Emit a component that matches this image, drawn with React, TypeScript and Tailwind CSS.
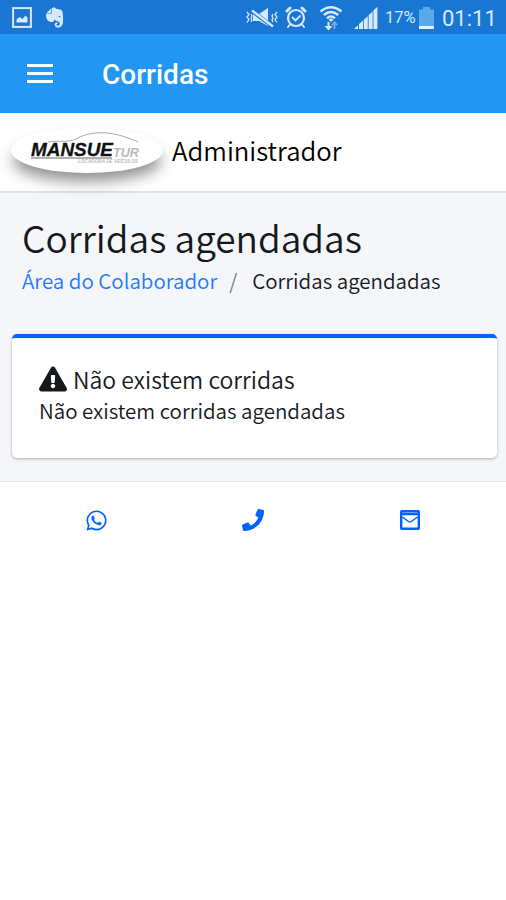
import React from 'react';
import { FaEvernote, FaExclamationTriangle, FaPhone, FaWhatsapp } from 'react-icons/fa';

const PictureIcon = () => (
  <svg width="20" height="21" viewBox="0 0 20 21" fill="none">
    <rect x="1.1" y="1.1" width="17.8" height="18.8" stroke="currentColor" strokeWidth="2" />
    <path d="M4.500 15.500v-3l3-2.500 3 2 3-3.500 2 2v5z" fill="currentColor" />
  </svg>
);

const MutedIcon = () => (
  <svg width="34" height="22" viewBox="0 0 34 22" fill="none" stroke="currentColor">
    <path d="M8 7h6l9-6v18l-9-5H8z" fill="currentColor" stroke="none" />
    <path d="M7 4l20 15" stroke="#1976d2" strokeWidth="4" />
    <path d="M7 3.500l21 16" strokeWidth="2.400" />
    <path d="M2 5l2 2.500-2 2.500 2 2.500-2 3M6 7l1 2-1 2 1 2-1 2M32 5l-2 2.500 2 2.500-2 2.500 2 3M28 7l-1 2 1 2-1 2 1 2" strokeWidth="1.300" />
  </svg>
);

const AlarmIcon = () => (
  <svg width="22" height="23" viewBox="0 0 22 23" fill="none" stroke="currentColor" strokeLinecap="round">
    <circle cx="11" cy="12" r="8" strokeWidth="2.200" />
    <path d="M2 5l3-3M20 5l-3-3" strokeWidth="3" />
    <path d="M5 18.500l-2 2.500M17 18.500l2 2.500" strokeWidth="2" />
    <path d="M7.500 11.500l3 3 4.500-4.500" strokeWidth="1.800" />
  </svg>
);

const WifiIcon = () => (
  <svg width="24" height="26" viewBox="0 0 24 26" fill="none" stroke="currentColor">
    <path d="M1.500 6.500Q12-2 22.500 6.500M4.800 10Q12 4 19.200 10M8 13.200q4-3.300 8 0" strokeWidth="2.400" />
    <path d="M12 17l-2.500-2.500q2.500-1.800 5 0z" fill="currentColor" stroke="none" />
    <path d="M9.500 17v5" strokeWidth="2" />
    <path d="M5.500 21h8l-4 4.500z" fill="currentColor" stroke="none" />
    <path d="M15.500 24v-5M13 20l2.500-2.800L18 20" strokeWidth="1.500" opacity=".55" />
  </svg>
);

const SignalIcon = () => (
  <svg width="24" height="23" viewBox="0 0 24 23" fill="currentColor">
    <path d="M0 23l4-3.800V23zM5 18l4-3.500V23H5zM9.800 13.700l4-3.500V23h-4zM14.600 9.200l4-3.600V23h-4zM19.400 4.500L23.400 .800V23h-4z" />
  </svg>
);

const BatteryIcon = () => (
  <svg width="15" height="22" viewBox="0 0 15 22">
    <path d="M4 0h7v2.500h4V22H0V2.500h4z" fill="#5aa9ea" />
    <path d="M0 19h15v3H0z" fill="#e3f0ff" />
  </svg>
);

const EnvelopeSquareIcon = () => (
  <svg width="20" height="20" viewBox="0 0 20 20" fill="none" stroke="currentColor">
    <rect x="1.200" y="1.200" width="17.600" height="17.600" rx=".5" strokeWidth="2.400" />
    <path d="M2 4h16" strokeWidth="2.500" />
    <path d="M2.500 7l6 4.500q1.500 1 3 0l6-4.500" strokeWidth="1.500" />
  </svg>
);

const Logo = () => (
  <div className="h-[45px] w-[152px] rounded-[50%] bg-white shadow-[0_10px_15px_-2px_rgba(0,0,0,0.45)]">
    <svg width="152" height="45" viewBox="0 0 152 45" fontFamily="'Liberation Sans', sans-serif" fontStyle="italic">
      <path d="M37 14C48 12 57 15 65 11C78 3 98 3 114 9Q121 11 127 14" fill="none" stroke="#aaa" />
      <path d="M20 30h81" stroke="#999" strokeWidth="1.500" />
      <text x="20" y="28" fontSize="18" fontWeight="bold" fill="#111" stroke="#111" strokeWidth=".3" textLength="82" lengthAdjust="spacingAndGlyphs">MANSUE</text>
      <text x="102" y="29" fontSize="13.500" fontWeight="bold" fill="#bbb" textLength="26" lengthAdjust="spacingAndGlyphs">TUR</text>
      <text x="67" y="35" fontSize="4.500" fontWeight="bold" fill="#bbb" textLength="60" lengthAdjust="spacingAndGlyphs">LOCADORA DE VEÍCULOS</text>
    </svg>
  </div>
);

const StatusBar = () => (
  <div className="flex h-[34px] items-center bg-[#1976d2] font-[Roboto,sans-serif] text-[#d6e9ff]">
    <div className="ml-3 flex items-center gap-[11px]">
      <PictureIcon />
      <FaEvernote size={23} />
    </div>
    <div className="ml-auto mr-[11px] flex items-center pt-px">
      <MutedIcon />
      <span className="ml-[6px]"><AlarmIcon /></span>
      <span className="ml-[12px]"><WifiIcon /></span>
      <span className="ml-[11px]"><SignalIcon /></span>
      <span className="ml-[7px] w-[30px] whitespace-nowrap pt-[2px] text-[16.5px] font-normal">17%</span>
      <span className="ml-[4px]"><BatteryIcon /></span>
      <span className="ml-[8px] w-[53px] whitespace-nowrap pt-[2px] text-[22px] font-normal">01:11</span>
    </div>
  </div>
);

const App: React.FC = () => {
  return (
    <div className="min-h-[900px] overflow-hidden bg-white font-['Noto_Sans_CJK_SC',sans-serif] font-[350] text-[#16191c]">
      <StatusBar />

      {/* App bar */}
      <div className="flex h-[79px] items-center bg-[#2196f3] font-[Roboto,sans-serif] text-white">
        <div className="ml-[27px] flex w-[26px] flex-col gap-[5px]">
          <span className="h-[3px] bg-white" />
          <span className="h-[3px] bg-white" />
          <span className="h-[3px] bg-white" />
        </div>
        <h1 className="ml-[49px] pt-[3px] text-[28px] font-medium">Corridas</h1>
      </div>

      {/* Brand */}
      <header className="flex h-[80px] items-start border-b-2 border-[#dee2e6] pl-[11px] pt-[15px]">
        <Logo />
        <span className="ml-[9px] mt-[4px] text-[25.7px] leading-[36px] text-black">Administrador</span>
      </header>

      {/* Content */}
      <main className="h-[289px] border-b border-[#e6e9ed] bg-[#f4f6f9] pl-[12px] pr-[9px] pt-[18px]">
        <h2 className="ml-[10px] text-[37px] leading-[52px]">Corridas agendadas</h2>
        <nav className="ml-[10px] flex pt-px text-[20.5px] leading-[32px]">
          <a className="text-[#2479ff]">Área do Colaborador</a>
          <span className="ml-[12px] text-[#6c757d]">/</span>
          <span className="ml-[15px]">Corridas agendadas</span>
        </nav>
        <section className="mt-[38px] h-[124px] rounded-[5px] border-t-4 border-[#0062ff] bg-white px-[27px] pt-[25px] shadow-[0_1px_3px_rgba(0,0,0,0.3)]">
          <div className="flex items-center gap-[6px] text-[23px] leading-[32px]">
            <FaExclamationTriangle size={28} />
            <span>Não existem corridas</span>
          </div>
          <p className="text-[20.5px] leading-[30px]">Não existem corridas agendadas</p>
        </section>
      </main>

      {/* Contact links */}
      <footer className="grid grid-cols-3 px-[18px] pt-[26px] text-[#0062ff]">
        <a className="flex h-6 items-center justify-center"><FaWhatsapp size={23} /></a>
        <a className="flex h-6 items-center justify-center"><FaPhone size={22} /></a>
        <a className="flex h-6 items-center justify-center"><EnvelopeSquareIcon /></a>
      </footer>
    </div>
  );
};

export default App;
